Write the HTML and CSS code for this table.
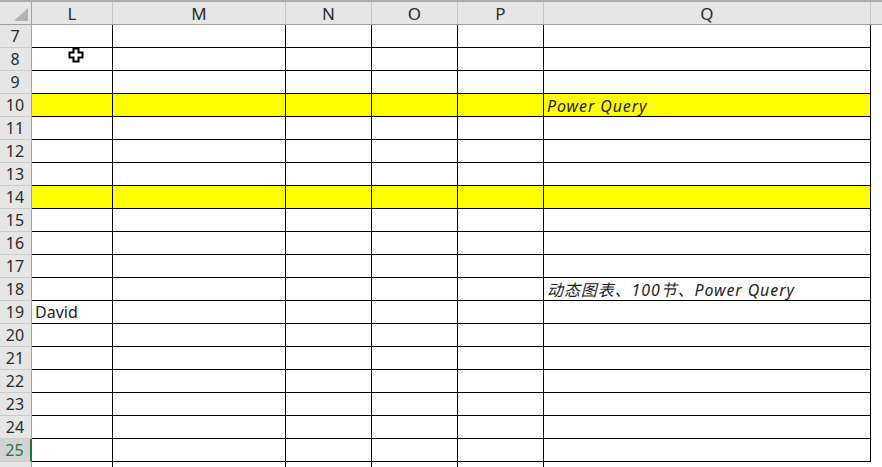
FILE: index.html
```html
<!DOCTYPE html>
<html lang="zh-CN">
<head>
<meta charset="utf-8">
<title>Sheet</title>
<link rel="stylesheet" href="styles.css">
</head>
<body>
<div class="sheet">
  <div class="topbar"></div>
  <div class="row head">
    <div class="corner"><svg class="tri" width="16" height="14" viewBox="0 0 16 14"><polygon points="15,0 15,13 1,13" fill="#b4b4b4"/></svg></div>
    <div class="ch">L</div><div class="ch">M</div><div class="ch">N</div><div class="ch">O</div><div class="ch">P</div><div class="ch">Q</div><div class="chf"></div>
  </div>
  <div class="row"><div class="rh">7</div><div class="c"></div><div class="c"></div><div class="c"></div><div class="c"></div><div class="c"></div><div class="c"></div><div class="f"></div></div>
  <div class="row"><div class="rh">8</div><div class="c"></div><div class="c"></div><div class="c"></div><div class="c"></div><div class="c"></div><div class="c"></div><div class="f"></div></div>
  <div class="row"><div class="rh">9</div><div class="c"></div><div class="c"></div><div class="c"></div><div class="c"></div><div class="c"></div><div class="c"></div><div class="f"></div></div>
  <div class="row hl"><div class="rh">10</div><div class="c"></div><div class="c"></div><div class="c"></div><div class="c"></div><div class="c"></div><div class="c it">Power Query</div><div class="f"></div></div>
  <div class="row"><div class="rh">11</div><div class="c"></div><div class="c"></div><div class="c"></div><div class="c"></div><div class="c"></div><div class="c"></div><div class="f"></div></div>
  <div class="row"><div class="rh">12</div><div class="c"></div><div class="c"></div><div class="c"></div><div class="c"></div><div class="c"></div><div class="c"></div><div class="f"></div></div>
  <div class="row"><div class="rh">13</div><div class="c"></div><div class="c"></div><div class="c"></div><div class="c"></div><div class="c"></div><div class="c"></div><div class="f"></div></div>
  <div class="row hl"><div class="rh">14</div><div class="c"></div><div class="c"></div><div class="c"></div><div class="c"></div><div class="c"></div><div class="c"></div><div class="f"></div></div>
  <div class="row"><div class="rh">15</div><div class="c"></div><div class="c"></div><div class="c"></div><div class="c"></div><div class="c"></div><div class="c"></div><div class="f"></div></div>
  <div class="row"><div class="rh">16</div><div class="c"></div><div class="c"></div><div class="c"></div><div class="c"></div><div class="c"></div><div class="c"></div><div class="f"></div></div>
  <div class="row"><div class="rh">17</div><div class="c"></div><div class="c"></div><div class="c"></div><div class="c"></div><div class="c"></div><div class="c"></div><div class="f"></div></div>
  <div class="row"><div class="rh">18</div><div class="c"></div><div class="c"></div><div class="c"></div><div class="c"></div><div class="c"></div><div class="c it">动态图表、100节、Power Query</div><div class="f"></div></div>
  <div class="row"><div class="rh">19</div><div class="c">David</div><div class="c"></div><div class="c"></div><div class="c"></div><div class="c"></div><div class="c"></div><div class="f"></div></div>
  <div class="row"><div class="rh">20</div><div class="c"></div><div class="c"></div><div class="c"></div><div class="c"></div><div class="c"></div><div class="c"></div><div class="f"></div></div>
  <div class="row"><div class="rh">21</div><div class="c"></div><div class="c"></div><div class="c"></div><div class="c"></div><div class="c"></div><div class="c"></div><div class="f"></div></div>
  <div class="row"><div class="rh">22</div><div class="c"></div><div class="c"></div><div class="c"></div><div class="c"></div><div class="c"></div><div class="c"></div><div class="f"></div></div>
  <div class="row"><div class="rh">23</div><div class="c"></div><div class="c"></div><div class="c"></div><div class="c"></div><div class="c"></div><div class="c"></div><div class="f"></div></div>
  <div class="row"><div class="rh">24</div><div class="c"></div><div class="c"></div><div class="c"></div><div class="c"></div><div class="c"></div><div class="c"></div><div class="f"></div></div>
  <div class="row"><div class="rh active">25</div><div class="c"></div><div class="c"></div><div class="c"></div><div class="c"></div><div class="c"></div><div class="c"></div><div class="f"></div></div>
  <div class="row"><div class="rh"></div><div class="c nb"></div><div class="c nb"></div><div class="c nb"></div><div class="c nb"></div><div class="c nb"></div><div class="c nb last"></div><div class="f"></div></div>
  <svg class="cursor" width="16" height="16" viewBox="0 0 16 16">
    <path d="M5.5 1.5 H10.5 V5.5 H14.5 V10.5 H10.5 V14.5 H5.5 V10.5 H1.5 V5.5 H5.5 Z" fill="#fff" stroke="#000" stroke-width="2"/>
  </svg>
</div>
</body>
</html>
```

FILE: styles.css
```css
* { box-sizing: border-box; }
html, body { margin: 0; padding: 0; background: #fff; }
body { width: 882px; height: 467px; overflow: hidden; }
.sheet {
  position: relative;
  font-family: "Noto Sans", "Noto Sans CJK SC", sans-serif;
  color: #1e1e1e;
}
.topbar { height: 2px; background: #ababab; }
.row {
  display: grid;
  grid-template-columns: 32px 81px 173px 86px 86px 86px 327px 1fr;
  grid-template-rows: 23px;
  height: 23px;
}
.row > div { min-height: 0; overflow: visible; }
.head { background: #e6e6e6; border-bottom: 1px solid #a0a0a0; grid-template-rows: 22px; }
.corner {
  border-right: 1px solid #a0a0a0;
  display: flex;
  align-items: flex-end;
  justify-content: flex-end;
  padding: 0 2px 2px 0;
}
.tri { display: block; }
.ch {
  border-right: 1px solid #c4c4c4;
  text-align: center;
  font-size: 17px;
  line-height: 21px;
  padding-top: 1px;
  color: #2a2a2a;
}
.rh {
  background: #e6e6e6;
  border-right: 1px solid #a0a0a0;
  border-bottom: 1px solid #cbcbcb;
  text-align: center;
  font-size: 16px;
  line-height: 21px;
  padding-top: 1px;
  padding-right: 1px;
  color: #2a2a2a;
}
.rh.active {
  background: #d3d3d3;
  color: #217346;
  border-right: 2px solid #217346;
}
.c {
  border-right: 1px solid #000;
  border-bottom: 1px solid #000;
  font-size: 16px;
  line-height: 21px;
  padding-left: 3px;
  padding-top: 1px;
  white-space: nowrap;
}
.c.nb { border-bottom: none; }
.c.last { border-right: none; }
.hl .c { background: #ffff00; }
.it { font-style: italic; letter-spacing: 0.9px; line-height: 20px; padding-top: 2px; }
.f { background: #fff; }
.cursor { position: absolute; left: 68px; top: 47px; }
```
